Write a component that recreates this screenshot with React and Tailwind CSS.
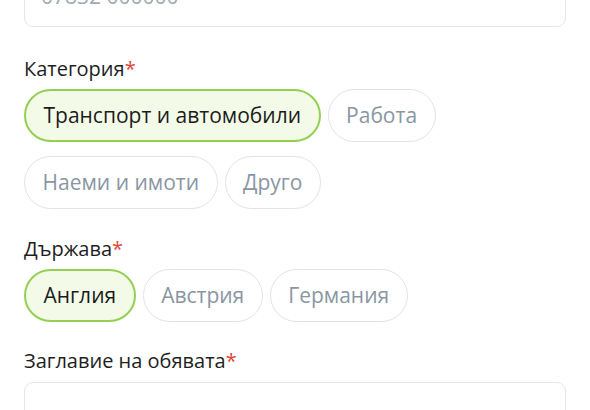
import React from "react";

const Chip = ({ label, selected }) => (
  <div
    className={
      "h-[53px] px-[17.5px] flex items-center rounded-full text-[21px] " +
      (selected
        ? "bg-[#f3fbe8] border-2 border-[#93d052] text-[#1c1c1c]"
        : "bg-white border-[1.5px] border-[#dfe4e9] text-[#8996a2]")
    }
  >
    {label}
  </div>
);

const Label = ({ children }) => (
  <div className="text-[20px] leading-[28px] text-[#1e1e1e]">
    {children}
    <span className="text-[#e0443a]">*</span>
  </div>
);

export default function App() {
  return (
    <div
      className="w-[590px] h-[410px] overflow-hidden bg-white px-6"
      style={{ fontFamily: '"Open Sans", "Noto Sans", sans-serif' }}
    >
      <div className="-mt-[29px] h-[56px] rounded-[9px] border-[1.5px] border-[#e3e7eb] px-4 pt-[10px]">
        <div className="text-[21px] leading-[28px] text-[#a0a9b3]">07832 000000</div>
      </div>

      <div className="mt-[28px]">
        <Label>Категория</Label>
        <div className="mt-[6px] flex flex-wrap gap-x-[7px] gap-y-[14px]">
          <Chip label="Транспорт и автомобили" selected />
          <Chip label="Работа" />
          <Chip label="Наеми и имоти" />
          <Chip label="Друго" />
        </div>
      </div>

      <div className="mt-[26px]">
        <Label>Държава</Label>
        <div className="mt-[6px] flex flex-wrap gap-x-[7px] gap-y-[14px]">
          <Chip label="Англия" selected />
          <Chip label="Австрия" />
          <Chip label="Германия" />
        </div>
      </div>

      <div className="mt-[25px]">
        <Label>Заглавие на обявата</Label>
        <div className="mt-[7px] h-[56px] rounded-[9px] border-[1.5px] border-[#e3e7eb]" />
      </div>
    </div>
  );
}
